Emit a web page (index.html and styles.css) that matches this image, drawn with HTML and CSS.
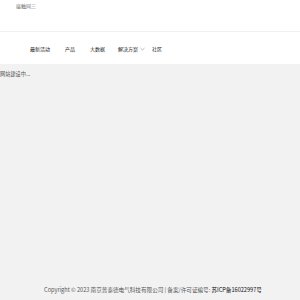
FILE: index.html
```html
<!DOCTYPE html>
<html lang="zh-CN">
<head>
<meta charset="utf-8">
<title>接触同三</title>
<link rel="stylesheet" href="styles.css">
</head>
<body>
<div class="top">
  <span class="brand">接触同三</span>
</div>
<nav class="nav">
  <a class="nav-item">最新活动</a>
  <a class="nav-item">产品</a>
  <a class="nav-item nav-short">大数据</a>
  <a class="nav-item nav-drop">解决方案<svg class="caret" viewBox="0 0 6 4" width="5" height="4"><path d="M0.5 0.8 L3 3.2 L5.5 0.8" fill="none" stroke="#999" stroke-width="0.8"/></svg></a>
  <a class="nav-item">社区</a>
</nav>
<main class="main">
  <p class="notice">网站建设中...</p>
</main>
<footer class="footer">
  Copyright © 2023 南京普泰德电气科技有限公司 | 备案/许可证编号: <span class="icp">苏ICP备16022997号</span>
</footer>
</body>
</html>
```
FILE: styles.css
```css
html, body {
  margin: 0;
  padding: 0;
  height: 100%;
}
body {
  display: flex;
  flex-direction: column;
  background: #f2f2f2;
  font-family: "Noto Sans CJK SC", "Liberation Sans", sans-serif;
  font-size: 5px;
  color: #555;
}
.top {
  background: #fff;
  height: 32px;
  border-bottom: 1px solid #f0f0f0;
  padding-left: 16px;
  box-sizing: border-box;
}
.brand {
  display: block;
  line-height: 12px;
  color: #666;
  font-size: 5px;
}
.nav {
  background: #fff;
  height: 32px;
  display: flex;
  align-items: center;
  padding-left: 30px;
  padding-top: 1px;
  box-sizing: border-box;
}
.nav-item {
  color: #222;
  margin-right: 15px;
  display: flex;
  align-items: center;
}
.nav-short {
  margin-right: 13px;
}
.nav-drop {
  margin-right: 7px;
}
.caret {
  margin-left: 2px;
}
.main {
  flex: 1;
}
.notice {
  margin: 0;
  padding-top: 6px;
  color: #555;
  line-height: 8px;
  font-size: 5.2px;
}
.footer {
  text-align: center;
  color: #555;
  padding-bottom: 6px;
  line-height: 8px;
  font-size: 5.6px;
  padding-left: 6px;
}
.icp {
  color: #111;
}
```
